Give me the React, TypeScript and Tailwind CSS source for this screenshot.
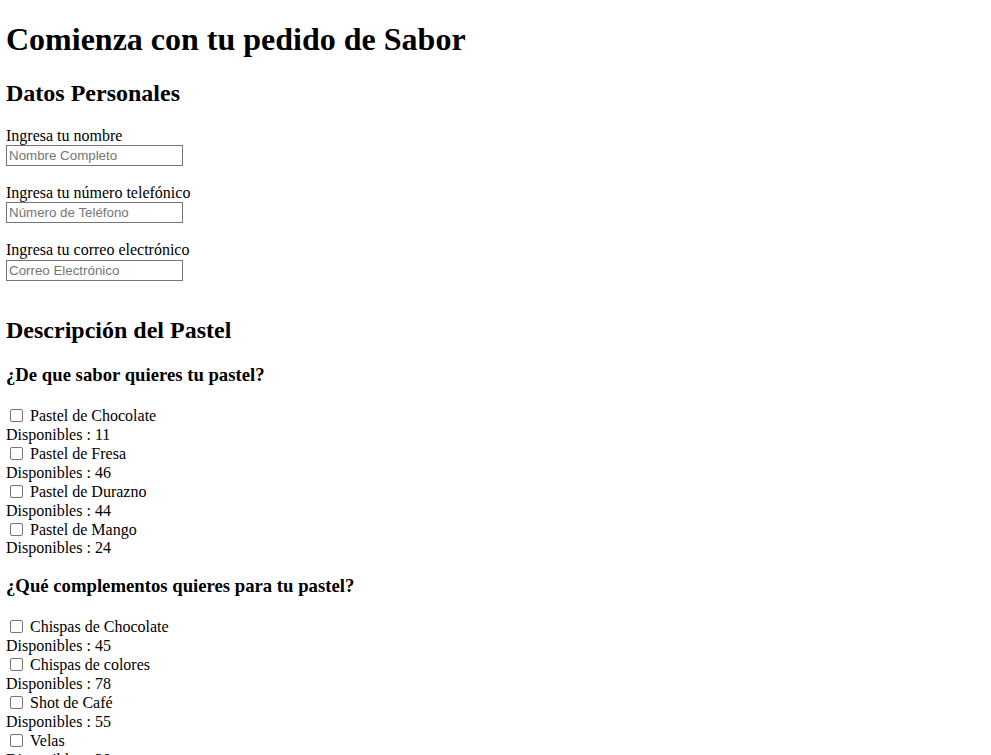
import React from "react";

const sabores = [
  { name: "Pastel de Chocolate", stock: 11 },
  { name: "Pastel de Fresa", stock: 46 },
  { name: "Pastel de Durazno", stock: 44 },
  { name: "Pastel de Mango", stock: 24 },
];

const complementos = [
  { name: "Chispas de Chocolate", stock: 45 },
  { name: "Chispas de colores", stock: 78 },
  { name: "Shot de Café", stock: 55 },
  { name: "Velas", stock: 30 },
];

function Field({ label, placeholder }: { label: string; placeholder: string }) {
  return (
    <div className="mb-[17.8px]">
      <label className="block h-[18.4px]">{label}</label>
      <input
        type="text"
        placeholder={placeholder}
        className="block h-[21px] w-[177px] border border-[#767676] bg-white px-[2px] py-[1px] font-['Liberation_Sans',Arial,sans-serif] text-[13.33px] text-black placeholder:text-[#757575] outline-none"
      />
    </div>
  );
}

function Option({ name, stock }: { name: string; stock: number }) {
  return (
    <div>
      <label className="flex h-[19.6px] items-center">
        <span className="ml-[4px] mr-[7px] inline-block h-[13px] w-[13px] rounded-[2px] border border-[#767676] bg-white" />
        {name}
      </label>
      <div className="h-[18.4px]">Disponibles : {stock}</div>
    </div>
  );
}

export default function App() {
  return (
    <div className="min-h-screen bg-white px-[6px] font-['Liberation_Serif','Times_New_Roman',serif] text-[16px] leading-[normal] text-black">
      <h1 className="my-[21.44px] text-[32px] font-bold">Comienza con tu pedido de Sabor</h1>

      <form>
        <h2 className="my-[19.92px] text-[24px] font-bold">Datos Personales</h2>
        <Field label="Ingresa tu nombre" placeholder="Nombre Completo" />
        <Field label="Ingresa tu número telefónico" placeholder="Número de Teléfono" />
        <Field label="Ingresa tu correo electrónico" placeholder="Correo Electrónico" />

        <h2 className="mt-[36.8px] mb-[19.92px] text-[24px] font-bold">Descripción del Pastel</h2>
        <h3 className="mt-[18.72px] mb-[19.7px] text-[18.72px] font-bold">¿De que sabor quieres tu pastel?</h3>
        {sabores.map((s) => (
          <Option key={s.name} name={s.name} stock={s.stock} />
        ))}

        <h3 className="mt-[17.5px] mb-[19.8px] text-[18.72px] font-bold">¿Qué complementos quieres para tu pastel?</h3>
        {complementos.map((c) => (
          <Option key={c.name} name={c.name} stock={c.stock} />
        ))}
      </form>
    </div>
  );
}
